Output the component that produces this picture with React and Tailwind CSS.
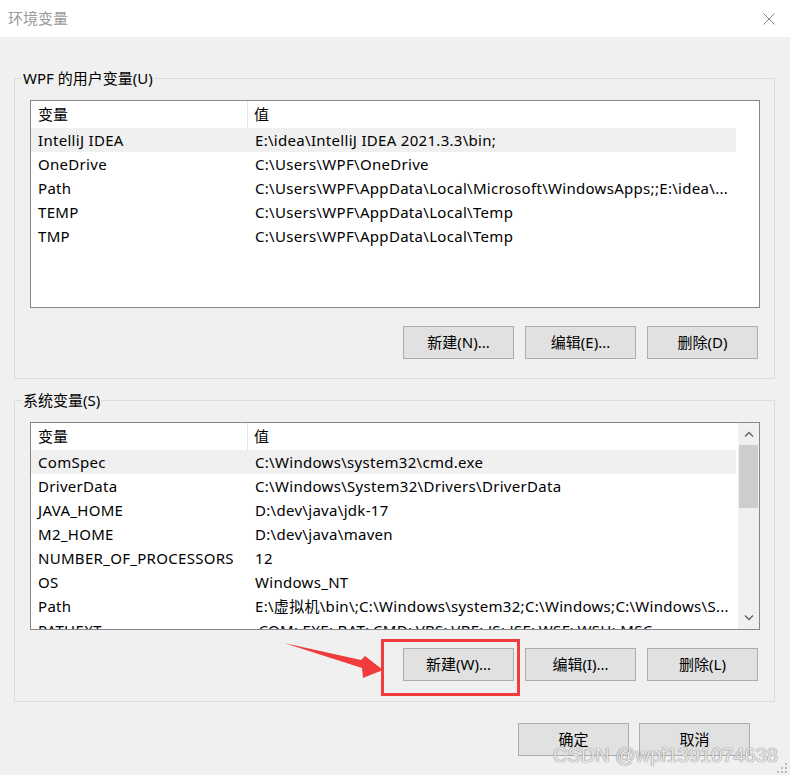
import React from 'react'

const userVars = [
  ['IntelliJ IDEA', 'E:\\idea\\IntelliJ IDEA 2021.3.3\\bin;'],
  ['OneDrive', 'C:\\Users\\WPF\\OneDrive'],
  ['Path', 'C:\\Users\\WPF\\AppData\\Local\\Microsoft\\WindowsApps;;E:\\idea\\...'],
  ['TEMP', 'C:\\Users\\WPF\\AppData\\Local\\Temp'],
  ['TMP', 'C:\\Users\\WPF\\AppData\\Local\\Temp'],
]

const sysVars = [
  ['ComSpec', 'C:\\Windows\\system32\\cmd.exe'],
  ['DriverData', 'C:\\Windows\\System32\\Drivers\\DriverData'],
  ['JAVA_HOME', 'D:\\dev\\java\\jdk-17'],
  ['M2_HOME', 'D:\\dev\\java\\maven'],
  ['NUMBER_OF_PROCESSORS', '12'],
  ['OS', 'Windows_NT'],
  ['Path', 'E:\\虚拟机\\bin\\;C:\\Windows\\system32;C:\\Windows;C:\\Windows\\S...'],
  ['PATHEXT', '.COM;.EXE;.BAT;.CMD;.VBS;.VBE;.JS;.JSE;.WSF;.WSH;.MSC'],
]

const WinButton = ({ children }) => (
  <button className="w-[111px] h-[33px] border border-[#adadad] bg-[#e1e1e1] text-[15px] text-black flex items-center justify-center">
    {children}
  </button>
)

const Chevron = ({ up }) => (
  <svg width="10" height="6" viewBox="0 0 10 6" className="block">
    <path
      d={up ? 'M1 5.5 L5 1.5 L9 5.5' : 'M1 0.5 L5 4.5 L9 0.5'}
      fill="none"
      stroke="#606060"
      strokeWidth="1.3"
    />
  </svg>
)

const Scrollbar = () => (
  <div className="w-[21px] ml-[1px] bg-[#f0f0f0] flex flex-col">
    <div className="h-[22px] flex items-center justify-center">
      <Chevron up />
    </div>
    <div className="h-[63px] mx-[1px] bg-[#cdcdcd]" />
    <div className="flex-1" />
    <div className="h-[22px] flex items-center justify-center">
      <Chevron />
    </div>
  </div>
)

const ListView = ({ rows, scroll }) => (
  <div className="h-[208px] border border-[#828790] bg-white flex overflow-hidden">
    <div className="w-[705px] shrink-0">
      <div className="h-[27px] flex items-center">
        <div className="w-[217px] h-full pl-[7px] flex items-center border-r border-[#e5e5e5]">变量</div>
        <div className="flex-1 pl-[6px]">值</div>
      </div>
      {rows.map(([name, value], i) => (
        <div
          key={name + i}
          className={`h-[24px] flex items-center tracking-[0.3px] ${i === 0 ? 'bg-[#f0f0f0]' : ''}`}
        >
          <div className="w-[217px] pl-[7px] whitespace-nowrap overflow-hidden">{name}</div>
          <div className="flex-1 pl-[7px] whitespace-nowrap overflow-hidden">{value}</div>
        </div>
      ))}
    </div>
    <div className="flex-1" />
    {scroll && <Scrollbar />}
  </div>
)

const Group = ({ label, children, className }) => (
  <fieldset className={`border border-[#dcdcdc] p-0 w-[761px] ${className}`}>
    <legend className="ml-[7px] px-[1px] h-[20px] leading-[20px]">{label}</legend>
    <div className="pl-[15px] pr-[14px] pt-[12px]">{children}</div>
  </fieldset>
)

export default function App() {
  return (
    <div
      className="relative w-[790px] h-[775px] bg-[#f0f0f0] text-[15px] text-black overflow-hidden"
      style={{ fontFamily: '"Noto Sans", "Noto Sans CJK SC", sans-serif' }}
    >
      {/* title bar */}
      <div className="h-[37px] bg-white flex items-center justify-between pl-[8px] pr-[15px]">
        <span className="text-[#9a9a9a]">环境变量</span>
        <svg width="12" height="12" viewBox="0 0 12 12">
          <path d="M0.5 0.5 L11.5 11.5 M11.5 0.5 L0.5 11.5" stroke="#808080" strokeWidth="1" />
        </svg>
      </div>

      <div className="pl-[14px]">
        <Group label="WPF 的用户变量(U)" className="mt-[31px]">
          <ListView rows={userVars} />
          <div className="flex justify-end gap-[11px] mt-[18px] pb-[19px] pr-[2px]">
            <WinButton>新建(N)...</WinButton>
            <WinButton>编辑(E)...</WinButton>
            <WinButton>删除(D)</WinButton>
          </div>
        </Group>

        <Group label="系统变量(S)" className="mt-[11px]">
          <ListView rows={sysVars} scroll />
          <div className="flex justify-end gap-[11px] mt-[18px] pb-[20px] pr-[2px]">
            <WinButton>新建(W)...</WinButton>
            <WinButton>编辑(I)...</WinButton>
            <WinButton>删除(L)</WinButton>
          </div>
        </Group>
      </div>

      <div className="flex justify-end gap-[10px] mt-[21px] pr-[40px]">
        <WinButton>确定</WinButton>
        <WinButton>取消</WinButton>
      </div>

      {/* annotation: red box + arrow */}
      <div className="absolute left-[381px] top-[639px] w-[139px] h-[57px] border-[3px] border-[#f03c3c]" />
      <svg className="absolute left-0 top-0" width="790" height="775" viewBox="0 0 790 775">
        <polygon
          points="284,643 361,660 365,656 383,670 363,678 362,668"
          fill="#f03c3c"
        />
      </svg>

      {/* watermark */}
      <div
        className="absolute left-[553px] top-[742px] text-[20px] leading-[26px] text-[#e8e8e8] whitespace-nowrap [text-shadow:0_0_1px_#808080,0_0_1px_#808080]"
        style={{ fontFamily: '"Liberation Sans", Arial, sans-serif' }}
      >
        CSDN @wpf1391074638
      </div>

      {/* resize grip */}
      <svg className="absolute right-[2px] bottom-[1px]" width="11" height="11" viewBox="0 0 11 11">
        <rect x="8" y="0" width="2" height="2" fill="#bcbcbc" />
        <rect x="4" y="4" width="2" height="2" fill="#bcbcbc" />
        <rect x="8" y="4" width="2" height="2" fill="#bcbcbc" />
        <rect x="0" y="8" width="2" height="2" fill="#bcbcbc" />
        <rect x="4" y="8" width="2" height="2" fill="#bcbcbc" />
        <rect x="8" y="8" width="2" height="2" fill="#bcbcbc" />
      </svg>
    </div>
  )
}
